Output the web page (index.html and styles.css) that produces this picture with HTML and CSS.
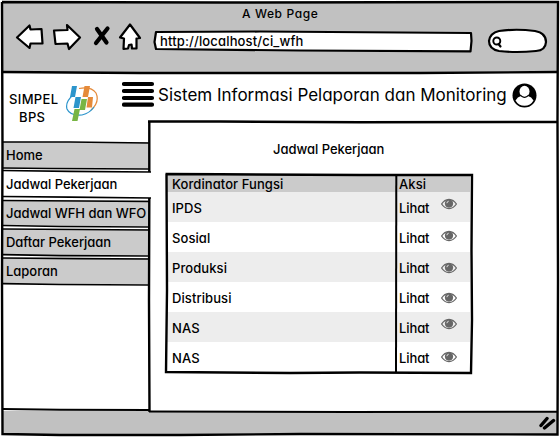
FILE: index.html
```html
<!DOCTYPE html>
<html lang="id">
<head>
<meta charset="utf-8">
<title>A Web Page</title>
<link rel="stylesheet" href="styles.css">
</head>
<body>
<svg class="defs" width="0" height="0">
  <symbol id="eye" viewBox="0 0 16 12">
    <path d="M.6 6Q3.4 1.5 8 1.3Q12.600 1.500 15.400 6Q12.600 10.400 8 10.600Q3.400 10.400 .6 6Z" fill="none" stroke="#666" stroke-width="1.300"/>
    <circle cx="8" cy="5.600" r="4.100" fill="#666"/>
    <path d="M5.900 5.200Q6 3.400 7.700 3.200" fill="none" stroke="#eee" stroke-width=".9"/>
  </symbol>
</svg>
<div class="window">
  <header class="chrome">
    <div class="window-title"><span>A Web Page</span></div>
    <div class="toolbar">
      <svg class="nav" width="134" height="32" viewBox="12 22 134 32">
        <g fill="#fff" stroke="#000" stroke-width="2.200" stroke-linejoin="round">
          <path d="M17 37.500L29.500 25.500L30.500 29.500L41.500 29L42.500 43.500L30.500 43.500L29.500 48Z"/>
          <path d="M54 30.500L67.500 30L67 25L80 37.500L69 49L67.500 43.500L55.500 44Z"/>
          <path d="M130 24.500L140 38L136.500 38.500L136.500 48.500L132 48.500L131.500 44.500L129 45L128 48.500L123.500 49L124 38.500L120 37.500Z"/>
        </g>
        <path d="M97 29L106.500 42.500M107.500 28.500L96 43" fill="none" stroke="#000" stroke-width="4.200" stroke-linecap="round"/>
      </svg>
      <div class="address">
        <svg class="outline" width="322" height="24" viewBox="152 29 322 24"><path d="M156 32L260 31.500L471 33L471.500 41L470.500 51.300L300 50.500L156 49L154.500 42Z" fill="#fff" stroke="#000" stroke-width="2.200" stroke-linejoin="round"/></svg>
        <span class="url">http://localhost/ci_wfh</span>
      </div>
      <svg class="search" width="64" height="28" viewBox="486 27 64 28">
        <path d="M499 31Q516 28.500 535 31Q546 33 546 42Q545.500 50.500 536 51Q516 53 499 51Q489 49 489 41Q490 33 499 31Z" fill="#fff" stroke="#000" stroke-width="2.200"/>
        <circle cx="496.800" cy="41" r="3.500" fill="none" stroke="#000" stroke-width="1.900"/>
        <path d="M498.500 44L500.500 46.500" stroke="#000" stroke-width="2.200" stroke-linecap="round"/>
      </svg>
    </div>
  </header>
  <div class="page">
    <aside class="sidebar">
      <div class="brand">
        <div class="brand-name"><span class="simpel">SIMPEL</span><span class="bps">BPS</span></div>
        <svg class="logo" width="34" height="38" viewBox="65 85 34 38">
          <path d="M79 88.500Q91 86 96 93Q100 102 91 110" fill="none" stroke="#e58a39" stroke-width="1.200"/>
          <path d="M73 95Q65 102 67 109Q70 116 82 115Q90 113 94 107" fill="none" stroke="#2c95cc" stroke-width="1.200"/>
          <path d="M72 86L77 86L75 97L70 97ZM75.500 97L81 97L79 108L73.500 108Z" fill="#2c95cc"/>
          <path d="M84.500 86L90 86L88 97L82.500 97ZM88 97L93 97L92 107.500L86.500 107.500Z" fill="#e58a39"/>
          <path d="M81.500 99L87 99L85 110L79.500 110ZM74.500 109L80 109L77.500 121L72 121Z" fill="#78b543"/>
        </svg>
      </div>
      <nav class="menu">
        <a class="item">Home</a>
        <a class="item active">Jadwal Pekerjaan</a>
        <a class="item wide">Jadwal WFH dan WFO</a>
        <a class="item">Daftar Pekerjaan</a>
        <a class="item">Laporan</a>
      </nav>
    </aside>
    <main class="main">
      <div class="heading">
        <svg class="bars" width="33" height="26" viewBox="122 81 33 26"><path d="M124 84H152M124 91H152M124 98H152M124 104.700H152" stroke="#000" stroke-width="4.200" stroke-linecap="round"/></svg>
        <h1>Sistem Informasi Pelaporan dan Monitoring</h1>
        <svg class="user" width="25" height="25" viewBox="0 0 25 25">
          <circle cx="12.500" cy="12.500" r="12" fill="#000"/>
          <path d="M3.500 17.500Q5.500 13.800 9 13Q12.500 15.800 16 13Q19.500 13.800 21.500 17.500Q18.500 22.800 12.500 22.800Q6.500 22.800 3.500 17.500Z" fill="#fff"/>
          <ellipse cx="12.500" cy="8.500" rx="5" ry="5.700" fill="#fff"/>
          <path d="M8.300 12.200Q12.500 16.500 16.700 12.200" fill="none" stroke="#000" stroke-width="1.200"/>
        </svg>
      </div>
      <section class="panel">
        <h2><span>Jadwal Pekerjaan</span></h2>
        <div class="table">
          <div class="row head"><span>Kordinator Fungsi</span><span class="aksi">Aksi</span></div>
          <div class="row"><span>IPDS</span><span class="lihat">Lihat</span><svg class="eye up"><use href="#eye"/></svg></div>
          <div class="row"><span>Sosial</span><span class="lihat">Lihat</span><svg class="eye mid"><use href="#eye"/></svg></div>
          <div class="row"><span>Produksi</span><span class="lihat">Lihat</span><svg class="eye"><use href="#eye"/></svg></div>
          <div class="row"><span>Distribusi</span><span class="lihat">Lihat</span><svg class="eye"><use href="#eye"/></svg></div>
          <div class="row"><span>NAS</span><span class="lihat">Lihat</span><svg class="eye up"><use href="#eye"/></svg></div>
          <div class="row"><span>NAS</span><span class="lihat">Lihat</span><svg class="eye low"><use href="#eye"/></svg></div>
        </div>
      </section>
    </main>
  </div>
  <footer class="status"><svg width="18" height="14" viewBox="537 417 18 14"><path d="M540 426.500L546 419.500M543.500 429L552.500 421.500" stroke="#000" stroke-width="3.400" stroke-linecap="round"/></svg></footer>
  <svg class="sketch" width="560" height="437" viewBox="0 0 560 437">
    <g fill="none" stroke="#000" stroke-width="2">
      <path d="M2 2L220 2.500L558 2L557.500 121M557.500 121L558 280L557.500 434.500L300 434L180 435L60 435L2.500 434L2 280L2.500 150L2 2" stroke-width="2.400"/>
      <path d="M2 72L140 73L420 73L557 72" stroke-width="2.400"/>
      <path d="M148 121.500L220 121.500L360 122.300L557 122M149.300 121V172M149.300 198L149 300L149.500 412" stroke-width="2.400"/>
      <path d="M2 409L60 409.700L149 410M149 411.500L350 412L557 411.700"/>
      <path d="M3 142L70 142L149 143M3 168L50 168.500L149 169M3 170.500L70 171.300L151 172M3 196.500L70 197.200L151 198M3 200.500L80 201L149 201.500M3 225.500L60 226.500L149 227M3 229L80 229.500L149 230M3 254.700L60 255.700L149 256M3 258L80 258.700L149 259M3 283.700L60 284.500L149 285" stroke-width="1.700"/>
      <path d="M165.500 174L220 174.300L360 175L472 175L471.500 250L472 320L471 373L360 372.500L290 373L166 372L167 290L166.500 174" stroke-width="2.400"/>
      <path d="M396.300 175L396 372"/>
    </g>
  </svg>
</div>
</body>
</html>
```
FILE: styles.css
```css
* { box-sizing: border-box; }
body { margin: 0; background: #fff; font: 500 13px/16px Inter, "Liberation Sans", sans-serif; font-feature-settings: "cv11"; color: #000; overflow: hidden; }
.defs { position: absolute; }
.window { position: relative; width: 560px; height: 437px; display: flex; flex-direction: column; padding: 2px 2px 3px; }
.sketch { position: absolute; inset: 0; pointer-events: none; }
.chrome { height: 70px; background: #c1c1c1; }
.window-title { height: 20px; padding: 4px 0 0 240px; font-size: 12px; letter-spacing: .6px; }
.toolbar { display: flex; align-items: flex-start; padding-left: 10px; }
.nav { margin-right: 6px; }
.address { position: relative; width: 322px; height: 24px; margin-top: 7px; padding: 4px 8px; }
.address .outline { position: absolute; inset: 0; }
.url { position: relative; letter-spacing: .15px; }
.search { margin: 5px 0 0 12px; }
.page { display: flex; height: 339px; }
.sidebar { width: 147px; flex: none; }
.brand { height: 70px; display: flex; padding: 13px 0 0 7px; }
.brand-name { width: 56px; padding-top: 5px; display: flex; flex-direction: column; line-height: 18px; letter-spacing: .35px; }
.bps { padding-left: 10px; }
.menu { display: flex; flex-direction: column; gap: 3px; }
.item { height: 26px; background: #cbcbcb; padding: 5px 4px 0; line-height: 16px; white-space: nowrap; letter-spacing: -.03px; }
.item.active { background: #fff; }
.main { flex: 1; min-width: 0; }
.heading { height: 49px; display: flex; margin-left: -27px; padding-top: 9px; }
h1 { margin: 3px 0 0 3px; width: 351px; white-space: nowrap; font-size: 17px; line-height: 22px; font-weight: 400; letter-spacing: 0; }
.user { margin: 2px 0 0 3px; }
.panel { padding: 20px 0 0 17px; }
h2 { margin: 0; padding-left: 107px; font: inherit; height: 33px; letter-spacing: -.03px; }
.table { width: 304px; height: 198px; }
.row { height: 30px; display: grid; grid-template-columns: 227px 42px 16px; padding-left: 6px; align-items: center; padding-top: 2px; letter-spacing: .08px; }
.lihat { letter-spacing: -.1px; }
.row:nth-child(even) { background: #ededed; }
.row.head { height: 18px; background: #cbcbcb; }
.eye { width: 16px; height: 12px; }
.eye.up { margin-top: -8px; }
.eye.mid { margin-top: -4px; }
.eye.low { margin-top: -3px; }
.status { height: 23px; background: #c1c1c1; display: flex; justify-content: flex-end; padding: 5px 2px; }
```
